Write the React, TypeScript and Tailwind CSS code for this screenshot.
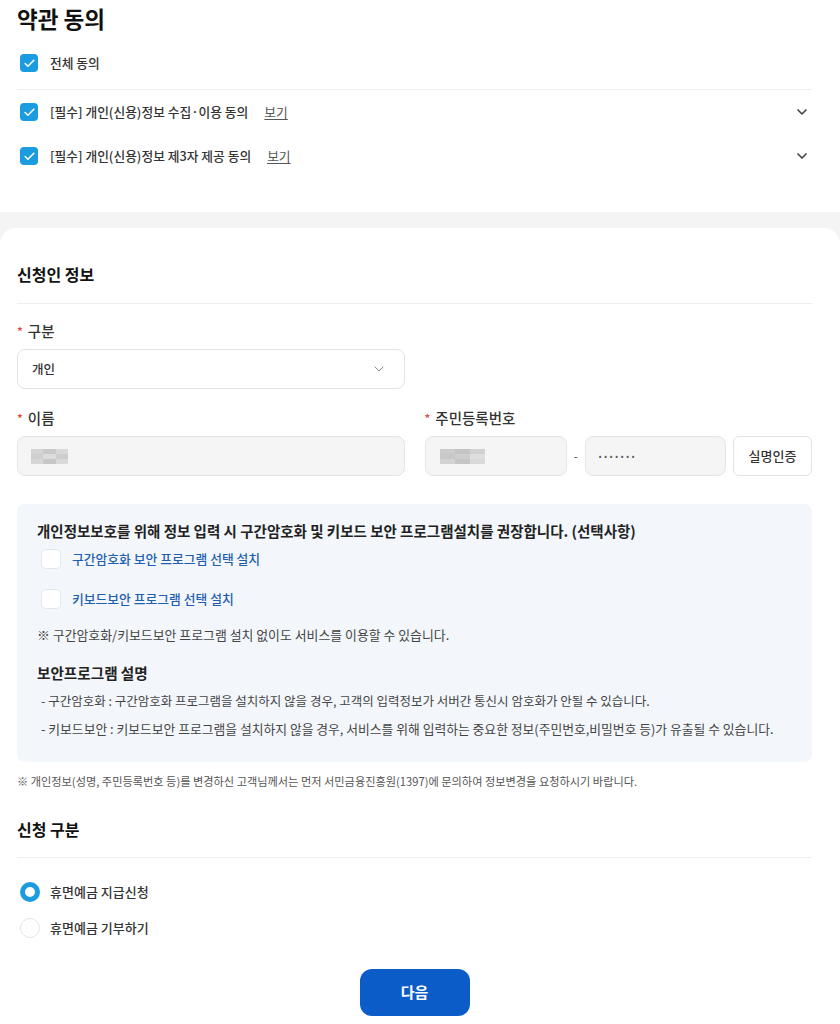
import { Check, ChevronDown } from "lucide-react";

const font = { fontFamily: '"Noto Sans CJK KR", "Noto Sans", sans-serif' };

function BlueCheck({ label, link }: { label: string; link?: boolean }) {
  return (
    <div className="flex items-center h-[36px] pl-[3px]">
      <span className="w-[18px] h-[18px] rounded-[4px] bg-[#1c9ce0] flex items-center justify-center">
        <Check size={13} strokeWidth={3} color="#fff" />
      </span>
      <span className="ml-[12px] text-[12.75px] font-medium text-[#333]">{label}</span>
      {link && (
        <span className="ml-[16px] text-[12.75px] text-[#555] underline underline-offset-2">보기</span>
      )}
      {link && (
        <span className="ml-auto mr-[2px] text-[#444]">
          <ChevronDown size={16} strokeWidth={2.5} />
        </span>
      )}
    </div>
  );
}

function Label({ text }: { text: string }) {
  return (
    <div className="flex items-center h-[20px] text-[14.5px] font-medium text-[#333]">
      <span className="text-[#d9473b] text-[12px] mr-[5px]">*</span>
      {text}
    </div>
  );
}

function Mosaic({ w }: { w: number }) {
  const cells = w === 37
    ? ["#d4d4d4", "#c9c9c9", "#d8d8d8", "#cfcfcf", "#dcdcdc", "#cdcdcd", "#d6d6d6", "#c7c7c7", "#dadada"]
    : ["#cccccc", "#c4c4c4", "#d1d1d1", "#c8c8c8", "#cecece", "#dedede", "#d3d3d3", "#c6c6c6", "#d9d9d9"];
  return (
    <div className="grid grid-cols-3 blur-[0.6px]" style={{ width: w, height: 15 }}>
      {cells.map((c, i) => (
        <div key={i} style={{ background: c }} />
      ))}
    </div>
  );
}

function WhiteCheck({ label }: { label: string }) {
  return (
    <div className="flex items-center h-[24px] pl-[4px]">
      <span className="w-[20px] h-[20px] rounded-[5px] bg-white border border-[#e4e8ee]" />
      <span className="ml-[11px] text-[12.8px] font-medium text-[#1f5fae]">{label}</span>
    </div>
  );
}

function Radio({ label, checked }: { label: string; checked?: boolean }) {
  return (
    <div className="flex items-center h-[24px] pl-[3px]">
      {checked ? (
        <span className="w-[20px] h-[20px] rounded-full border-[5px] border-[#1c9ce0] bg-white" />
      ) : (
        <span className="w-[20px] h-[20px] rounded-full border border-[#e3e3e3] bg-white" />
      )}
      <span className="ml-[10px] text-[13px] font-medium text-[#333]">{label}</span>
    </div>
  );
}

export default function App() {
  return (
    <div className="w-[840px] h-[1024px] overflow-hidden bg-[#f4f4f4]" style={font}>
      <section className="bg-white pl-[17px] pr-[28px] pb-[38px]">
        <div className="h-[38px] flex items-center text-[22.5px] font-bold text-[#111]">약관 동의</div>
        <div className="mt-[7px]">
          <BlueCheck label="전체 동의" />
        </div>
        <div className="mt-[8px] border-t border-[#efefef]" />
        <div className="mt-[4px]">
          <BlueCheck label="[필수] 개인(신용)정보 수집·이용 동의" link />
        </div>
        <div className="mt-[8px]">
          <BlueCheck label="[필수] 개인(신용)정보 제3자 제공 동의" link />
        </div>
      </section>

      <section className="mt-[16px] bg-white rounded-t-[16px] pl-[17px] pr-[28px] pt-[31px] h-[796px]">
        <div className="h-[30px] flex items-center text-[16px] font-bold text-[#111]">신청인 정보</div>
        <div className="mt-[14px] border-t border-[#efefef]" />

        <div className="mt-[17px] grid grid-cols-2 gap-x-[20px]">
          <div>
            <Label text="구분" />
            <div className="mt-[8px] h-[40px] rounded-[8px] border border-[#e3e3e3] bg-white flex items-center pl-[14px] pr-[17px]">
              <span className="text-[12.5px] font-medium text-[#333]">개인</span>
              <span className="ml-auto text-[#888]">
                <ChevronDown size={16} strokeWidth={1.5} />
              </span>
            </div>
          </div>
          <div />

          <div className="mt-[19px]">
            <Label text="이름" />
            <div className="mt-[8px] h-[40px] rounded-[8px] border border-[#e6e6e6] bg-[#f5f5f5] flex items-center pl-[13px]">
              <Mosaic w={37} />
            </div>
          </div>
          <div className="mt-[19px]">
            <Label text="주민등록번호" />
            <div className="mt-[8px] flex items-center">
              <div className="flex-1 h-[40px] rounded-[8px] border border-[#e6e6e6] bg-[#f5f5f5] flex items-center pl-[14px]">
                <Mosaic w={45} />
              </div>
              <span className="w-[18px] text-center text-[12px] text-[#555]">-</span>
              <div className="flex-1 h-[40px] rounded-[8px] border border-[#e6e6e6] bg-[#f5f5f5] flex items-center pl-[13px]">
                <span className="text-[8px] tracking-[2.8px] text-[#555]">•••••••</span>
              </div>
              <button className="ml-[7px] w-[79px] h-[40px] rounded-[6px] border border-[#e3e3e3] bg-white text-[13px] font-medium text-[#333]">
                실명인증
              </button>
            </div>
          </div>
        </div>

        <div className="mt-[28px] rounded-[8px] bg-[#f3f7fb] pl-[20px] pr-[16px] pt-[17px] pb-[24px]">
          <div className="h-[20px] flex items-center text-[14.5px] font-bold text-[#222] whitespace-nowrap">
            개인정보보호를 위해 정보 입력 시 구간암호화 및 키보드 보안 프로그램설치를 권장합니다. (선택사항)
          </div>
          <div className="mt-[6px]">
            <WhiteCheck label="구간암호화 보안 프로그램 선택 설치" />
          </div>
          <div className="mt-[16px]">
            <WhiteCheck label="키보드보안 프로그램 선택 설치" />
          </div>
          <div className="mt-[15px] h-[18px] flex items-center text-[12.9px] text-[#444]">
            ※ 구간암호화/키보드보안 프로그램 설치 없이도 서비스를 이용할 수 있습니다.
          </div>
          <div className="mt-[18px] h-[22px] flex items-center text-[14.6px] font-bold text-[#222]">보안프로그램 설명</div>
          <div className="mt-[8px] h-[18px] flex items-center pl-[4px] text-[12.5px] text-[#444] whitespace-nowrap">
            - 구간암호화 : 구간암호화 프로그램을 설치하지 않을 경우, 고객의 입력정보가 서버간 통신시 암호화가 안될 수 있습니다.
          </div>
          <div className="mt-[10px] h-[18px] flex items-center pl-[4px] text-[12.8px] text-[#444] whitespace-nowrap">
            - 키보드보안 : 키보드보안 프로그램을 설치하지 않을 경우, 서비스를 위해 입력하는 중요한 정보(주민번호,비밀번호 등)가 유출될 수 있습니다.
          </div>
        </div>

        <div className="mt-[11px] h-[16px] flex items-center text-[11.2px] text-[#555] whitespace-nowrap">
          ※ 개인정보(성명, 주민등록번호 등)를 변경하신 고객님께서는 먼저 서민금융진흥원(1397)에 문의하여 정보변경을 요청하시기 바랍니다.
        </div>

        <div className="mt-[25px] h-[30px] flex items-center text-[16px] font-bold text-[#111]">신청 구분</div>
        <div className="mt-[13px] border-t border-[#efefef]" />
        <div className="mt-[22px]">
          <Radio label="휴면예금 지급신청" checked />
        </div>
        <div className="mt-[12px]">
          <Radio label="휴면예금 기부하기" />
        </div>

        <div className="mt-[29px] flex justify-center">
          <button className="w-[110px] h-[47px] rounded-[12px] bg-[#0b5cc9] text-white text-[15px] font-bold">
            다음
          </button>
        </div>
      </section>
    </div>
  );
}
